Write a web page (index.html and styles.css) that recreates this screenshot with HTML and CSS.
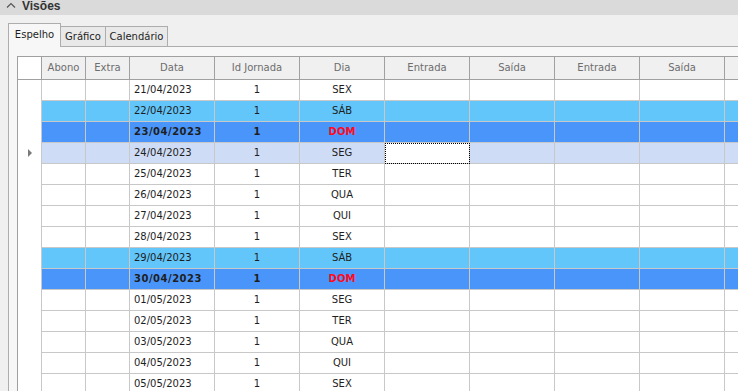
FILE: index.html
```html
<!DOCTYPE html>
<html>
<head>
    <title>Visões</title>
    <link rel="stylesheet" href="styles.css">
</head>
<body>
    <div class="titlebar">
        <svg class="chevron" width="10" height="6" viewBox="0 0 10 6"><polyline points="1,5.5 5,1.5 9,5.5" fill="none" stroke="#555" stroke-width="1.2"/></svg>
        <span class="title">Visões</span>
    </div>

    <div class="tabs">
        <div class="tab active">Espelho</div>
        <div class="tab tab-grafico">Gráfico</div>
        <div class="tab tab-cal">Calendário</div>
    </div>

    <div class="panel">
        <div class="grid">
            <div class="row head">
                <div class="cell rh"></div>
                <div class="cell w44">Abono</div>
                <div class="cell w44">Extra</div>
                <div class="cell">Data</div>
                <div class="cell">Id Jornada</div>
                <div class="cell">Dia</div>
                <div class="cell">Entrada</div>
                <div class="cell">Saída</div>
                <div class="cell">Entrada</div>
                <div class="cell">Saída</div>
                <div class="cell"></div>
            </div>
            <div id="rows"></div>
        </div>
    </div>

    <script>
        var dias = [
            ['21/04/2023', 'SEX', ''],
            ['22/04/2023', 'SÁB', 'sab'],
            ['23/04/2023', 'DOM', 'dom'],
            ['24/04/2023', 'SEG', 'current'],
            ['25/04/2023', 'TER', ''],
            ['26/04/2023', 'QUA', ''],
            ['27/04/2023', 'QUI', ''],
            ['28/04/2023', 'SEX', ''],
            ['29/04/2023', 'SÁB', 'sab'],
            ['30/04/2023', 'DOM', 'dom'],
            ['01/05/2023', 'SEG', ''],
            ['02/05/2023', 'TER', ''],
            ['03/05/2023', 'QUA', ''],
            ['04/05/2023', 'QUI', ''],
            ['05/05/2023', 'SEX', '']
        ];

        var html = '';
        dias.forEach(function(d) {
            html += '<div class="row ' + d[2] + '">';
            html += '<div class="cell rh">' + (d[2] == 'current' ? '<span class="arrow"></span>' : '') + '</div>';
            html += '<div class="cell w44"></div><div class="cell w44"></div>';
            html += '<div class="cell data">' + d[0] + '</div>';
            html += '<div class="cell">1</div>';
            html += '<div class="cell dia">' + d[1] + '</div>';
            html += '<div class="cell' + (d[2] == 'current' ? ' focus' : '') + '"></div>';
            html += '<div class="cell"></div><div class="cell"></div><div class="cell"></div><div class="cell"></div>';
            html += '</div>';
        });
        document.getElementById('rows').innerHTML = html;
    </script>
</body>
</html>
```

FILE: styles.css
```css
body {
    margin: 0;
    width: 738px;
    height: 391px;
    overflow: hidden;
    background-color: #f0f0f0;
    font-family: "DejaVu Sans", Verdana, sans-serif;
    font-size: 10px;
    color: #1e1e1e;
}
.titlebar {
    height: 15px;
    background-color: #dadada;
    display: flex;
    align-items: center;
}
.chevron {
    margin-left: 6px;
    margin-top: -5px;
}
.title {
    margin-left: 6px;
    margin-top: -4px;
    font-family: "Liberation Sans", Arial, sans-serif;
    font-size: 12px;
    font-weight: bold;
    color: #333;
}
.tabs {
    display: flex;
    align-items: flex-end;
    margin-top: 8px;
    padding-left: 8px;
    height: 23px;
}
.tab {
    box-sizing: border-box;
    height: 20px;
    line-height: 19px;
    border-top: 1px solid #adadad;
    border-right: 1px solid #adadad;
    background-color: #e9e9e9;
    text-align: center;
    color: #1e1e1e;
}
.tab.active {
    position: relative;
    z-index: 1;
    width: 53px;
    height: 24px;
    line-height: 22px;
    margin-bottom: -1px;
    border-left: 1px solid #adadad;
    background-color: #f7f7f7;
}
.tab-grafico {
    width: 45px;
}
.tab-cal {
    width: 62px;
}
.panel {
    margin-left: 8px;
    border-top: 1px solid #adadad;
    border-left: 1px solid #adadad;
    background-color: #f7f7f7;
    padding: 9px 0 0 8px;
}
.grid {
    border-top: 1px solid #a0a0a0;
    border-left: 1px solid #a0a0a0;
    background-color: #fff;
    overflow: hidden;
}
.row {
    display: flex;
    height: 21px;
}
.cell {
    box-sizing: border-box;
    flex: none;
    width: 85px;
    height: 21px;
    line-height: 20px;
    border-right: 1px solid #c8c8c8;
    border-bottom: 1px solid #c8c8c8;
    text-align: center;
    white-space: nowrap;
}
.cell.w44 {
    width: 44px;
}
.cell.rh {
    width: 24px;
    border-bottom: none;
    background-color: #fff;
    position: relative;
}
.cell.data {
    text-align: left;
    padding-left: 4px;
}
.head {
    height: 23px;
}
.head .cell {
    height: 23px;
    line-height: 22px;
    background-color: #f0f0f0;
    color: #6d6d6d;
    border-right-color: #a0a0a0;
    border-bottom: 1px solid #a0a0a0;
}
.sab .cell {
    background-color: #62c6fa;
}
.dom .cell {
    background-color: #4a95fa;
    font-weight: bold;
}
.dom .data {
    letter-spacing: 0.5px;
}
.dom .dia {
    color: #ff0a1e;
}
.current .cell {
    background-color: #cfdcf5;
}
.row .cell.rh {
    background-color: #fff;
}
.cell.focus {
    background-color: #fff;
    outline: 1px dotted #000;
    outline-offset: -1px;
}
.arrow {
    position: absolute;
    left: 10px;
    top: 6px;
    width: 0;
    height: 0;
    border-top: 4px solid transparent;
    border-bottom: 4px solid transparent;
    border-left: 4px solid #7a7a7a;
}
```
